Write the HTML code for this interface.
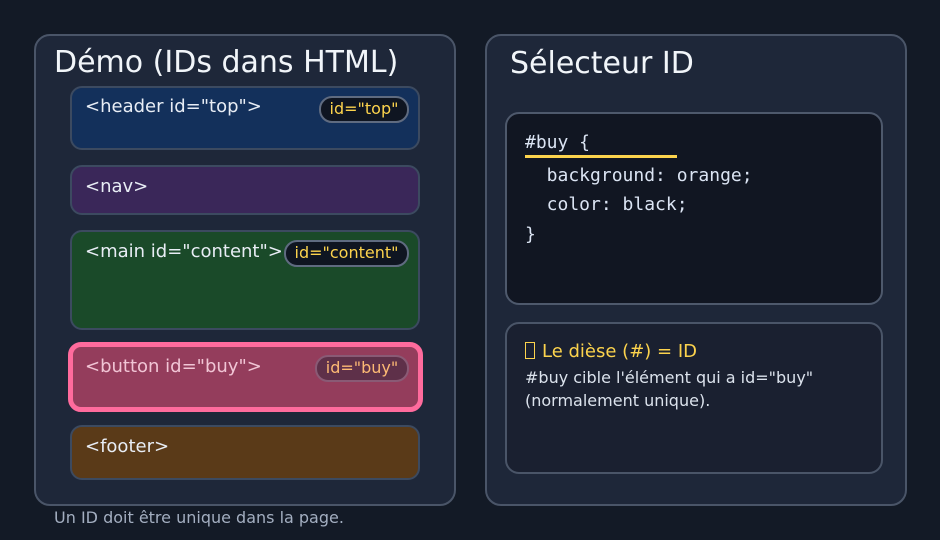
<!DOCTYPE html>
<html><head><meta charset="utf-8"><style>
*{margin:0;padding:0;box-sizing:border-box}
body{width:940px;height:540px;background:#131a26;font-family:"DejaVu Sans","Liberation Sans",sans-serif;position:relative;overflow:hidden;color:#e2e8f0}
.a{position:absolute}
.panel{background:#1e2739;border:2px solid #4a5568;border-radius:16px}
.box{border:2px solid #3c4a60;border-radius:12px}
.lbl{font-size:18px;color:#e8edf5;white-space:nowrap}
.badge{border:2px solid #5f6b80;border-radius:13px;background:#0f1521;color:#fcd34d;font-size:16px;text-align:center;line-height:22px;white-space:nowrap}
.mono{font-family:"DejaVu Sans Mono","Liberation Mono",monospace;font-size:18px;color:#dbe4f3;white-space:pre}
</style></head><body>
<div class="a panel" style="left:34px;top:34px;width:422px;height:472px"></div>
<div class="a" style="left:54px;top:45px;font-size:30px;color:#f1f5f9">Démo (IDs dans HTML)</div>

<div class="a box" style="left:70px;top:86px;width:350px;height:64px;background:#13305b"></div>
<div class="a lbl" style="left:85px;top:96px">&lt;header id="top"&gt;</div>
<div class="a badge" style="left:319px;top:96px;width:90px;height:27px">id="top"</div>

<div class="a box" style="left:70px;top:165px;width:350px;height:50px;background:#3a2759"></div>
<div class="a lbl" style="left:85px;top:176px">&lt;nav&gt;</div>

<div class="a box" style="left:70px;top:230px;width:350px;height:100px;background:#1a4a29"></div>
<div class="a lbl" style="left:85px;top:241px">&lt;main id="content"&gt;</div>
<div class="a badge" style="left:284px;top:240px;width:125px;height:27px">id="content"</div>

<div class="a" style="left:68px;top:342px;width:355px;height:70px;background:#943d5c;border:5px solid #ff6b9d;border-radius:13px"></div>
<div class="a lbl" style="left:85px;top:356px;color:#f1c5d5">&lt;button id="buy"&gt;</div>
<div class="a badge" style="left:315px;top:355px;width:94px;height:27px;background:#5e3049;border-color:#8a5a75;color:#fdba74">id="buy"</div>

<div class="a box" style="left:70px;top:425px;width:350px;height:55px;background:#5a3a18"></div>
<div class="a lbl" style="left:85px;top:436px">&lt;footer&gt;</div>

<div class="a" style="left:54px;top:508px;font-size:16px;color:#a3aec0">Un ID doit être unique dans la page.</div>

<div class="a panel" style="left:485px;top:34px;width:422px;height:472px"></div>
<div class="a" style="left:510px;top:46px;font-size:30px;color:#f1f5f9">Sélecteur ID</div>

<div class="a" style="left:505px;top:112px;width:378px;height:193px;background:#111622;border:2px solid #4e596c;border-radius:14px"></div>
<div class="a mono" style="left:525px;top:132px">#buy {</div>
<div class="a" style="left:525px;top:155px;width:152px;height:3px;background:#fcd34d"></div>
<div class="a mono" style="left:525px;top:165px">  background: orange;</div>
<div class="a mono" style="left:525px;top:194px">  color: black;</div>
<div class="a mono" style="left:525px;top:224px">}</div>

<div class="a" style="left:505px;top:322px;width:378px;height:152px;background:#1a2030;border:2px solid #4a5568;border-radius:14px"></div>
<div class="a" style="left:525px;top:341px;font-size:18px;color:#fcd34d;white-space:nowrap"><span style="display:inline-block;width:10px;height:17px;border:1.5px solid #fcd34d;vertical-align:-2px;margin-right:7px"></span>Le dièse (#) = ID</div>
<div class="a" style="left:525px;top:366px;font-size:16px;line-height:23px;color:#dbe2ec;white-space:nowrap">#buy cible l'élément qui a id="buy"<br>(normalement unique).</div>
</body></html>
